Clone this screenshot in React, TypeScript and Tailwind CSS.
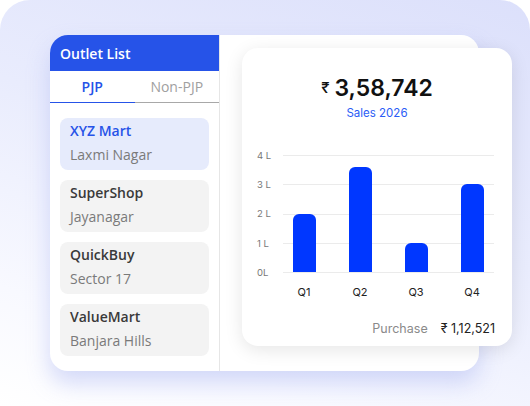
import React from "react";

interface Outlet {
  name: string;
  area: string;
  active?: boolean;
}

const outlets: Outlet[] = [
  { name: "XYZ Mart", area: "Laxmi Nagar", active: true },
  { name: "SuperShop", area: "Jayanagar" },
  { name: "QuickBuy", area: "Sector 17" },
  { name: "ValueMart", area: "Banjara Hills" },
];

const quarters = [
  { label: "Q1", value: 2 },
  { label: "Q2", value: 3.6 },
  { label: "Q3", value: 1 },
  { label: "Q4", value: 3 },
];

const ticks = ["4 L", "3 L", "2 L", "1 L", "0L"];

const CHART_H = 117;

export default function App() {
  return (
    <div className="w-[530px] h-[406px] overflow-hidden bg-white">
      <div className="w-[530px] h-[406px] rounded-t-[30px] bg-[linear-gradient(200deg,#dce0fb_0%,#e9ecfd_45%,#f8f9ff_80%,#ffffff_100%)] pl-[50px] pt-[35px]">
        {/* main card */}
        <div className="w-[429px] h-[336px] bg-white rounded-[18px] flex shadow-[0_12px_22px_rgba(165,175,240,0.45)]">
          {/* outlet list */}
          <div className="w-[170px] shrink-0 border-r border-[#e6e6e6] flex flex-col font-['Open_Sans',sans-serif]">
            <div className="h-[36px] bg-[#2653e8] rounded-tl-[18px] px-[10px] flex items-center text-white text-[14px] font-semibold">
              Outlet List
            </div>
            <div className="flex h-[32px]">
              <div className="flex-1 flex items-center justify-center border-b border-[#2653e8] text-[#2653e8] text-[14px] font-semibold">
                PJP
              </div>
              <div className="flex-1 flex items-center justify-center border-b border-[#a8a8a8] text-[#a0a0a0] text-[14px]">
                Non-PJP
              </div>
            </div>
            <div className="px-[10px] pt-[15px] flex flex-col gap-[10px]">
              {outlets.map((o) => (
                <div
                  key={o.name}
                  className={`h-[52px] rounded-[8px] px-[10px] flex flex-col justify-center ${
                    o.active ? "bg-[#e6ebfc]" : "bg-[#f3f3f3]"
                  }`}
                >
                  <div
                    className={`text-[14px] leading-[24px] font-semibold -mt-[2px] ${
                      o.active ? "text-[#2653e8]" : "text-[#3a3a3a]"
                    }`}
                  >
                    {o.name}
                  </div>
                  <div className="text-[14px] leading-[24px] text-[#7a7a7a]">{o.area}</div>
                </div>
              ))}
            </div>
          </div>

          {/* sales card */}
          <div className="flex-1 pl-[22px] pt-[13px]">
            <div className="w-[270px] h-[298px] shrink-0 bg-white rounded-[16px] shadow-[0_4px_18px_rgba(0,0,0,0.10)] flex flex-col font-['Inter',sans-serif]">
              <div className="pt-[26px] flex items-center justify-center gap-[5px] text-[#111]">
                <span className="text-[15px] leading-[28px] font-medium">₹</span>
                <span className="text-[23px] leading-[28px] font-semibold">3,58,742</span>
              </div>
              <div className="mt-[3px] text-center text-[11.5px] leading-[16px] text-[#2a5cf6]">Sales 2026</div>

              {/* chart */}
              <div className="relative mt-[34px]" style={{ height: CHART_H + 1 }}>
                <div className="absolute inset-0 flex flex-col justify-between">
                  {ticks.map((t) => (
                    <div key={t} className="h-px flex items-center pl-[15px] pr-[18px]">
                      <span className="w-[26px] text-[9.5px] leading-none text-[#777]">{t}</span>
                      <span className="flex-1 h-px bg-[#ebebeb]" />
                    </div>
                  ))}
                </div>
                <div className="absolute left-[34px] w-[224px] top-0 bottom-[1px] grid grid-cols-4">
                  {quarters.map((q) => (
                    <div key={q.label} className="flex items-end justify-center">
                      <div
                        className="w-[23px] bg-[#0037ff] rounded-t-[6px]"
                        style={{ height: (q.value / 4) * CHART_H }}
                      />
                    </div>
                  ))}
                </div>
              </div>
              <div className="ml-[34px] w-[224px] grid grid-cols-4 mt-[12px]">
                {quarters.map((q) => (
                  <div key={q.label} className="text-center text-[11px] leading-[14px] text-[#222]">
                    {q.label}
                  </div>
                ))}
              </div>

              <div className="mt-auto pb-[9px] pr-[17px] flex justify-end items-center gap-[13px] text-[12.5px] leading-[16px]">
                <span className="text-[#8a8a8a]">Purchase</span>
                <span className="text-[#222]">₹ 1,12,521</span>
              </div>
            </div>
          </div>
        </div>
      </div>
    </div>
  );
}
